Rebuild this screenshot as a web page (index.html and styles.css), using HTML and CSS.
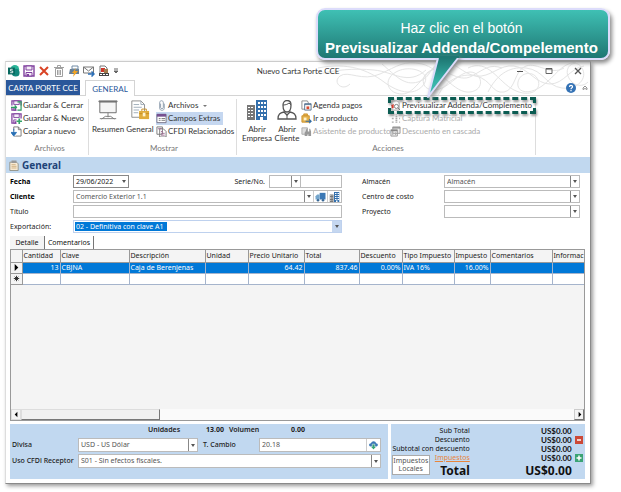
FILE: index.html
```html
<!DOCTYPE html>
<html lang="es">
<head>
<meta charset="utf-8">
<title>Nuevo Carta Porte CCE</title>
<link rel="stylesheet" href="styles.css">
</head>
<body>
<svg class="defs" width="0" height="0" aria-hidden="true">
  <defs>
    <symbol id="floppy" viewBox="0 0 12 12"><path d="M1 1h10v10H1z" fill="#fff" stroke="#80419e" stroke-width="1.4"/><path d="M3 1h6v4H3zM3 7.500h6V11H3z" fill="#f4ecf7" stroke="#80419e"/><path d="M4 9h2v2H4z" fill="#80419e"/></symbol>
    <symbol id="page" viewBox="0 0 12 12"><path d="M3 1h5l3 3v7H3z" fill="#fff" stroke="#777"/><path d="M8 1v3h3" fill="none" stroke="#777"/></symbol>
    <symbol id="building" viewBox="0 0 20 20"><path d="M9 0h11v20H9z" fill="#3470ad"/><path d="M0 5h8v15H0z" fill="#777"/><path d="M11 2h2v2h-2zm3 0h2v2h-2zm3 0h2v2h-2zm-6 4h2v2h-2zm3 0h2v2h-2zm3 0h2v2h-2zm-6 4h2v2h-2zm3 0h2v2h-2zm3 0h2v2h-2zm-6 4h2v2h-2zm3 0h2v2h-2zm3 0h2v2h-2zM1 7h2v1H1zm3 0h2v1H4zM1 10h2v1H1zm3 0h2v1H4zM1 13h2v1H1zm3 0h2v1H4zM1 16h2v1H1zm3 0h2v1H4zM13 17h3v3h-3z" fill="#fff"/></symbol>
  </defs>
</svg>

<div class="window">
  <header class="chrome">
    <svg class="swirls" viewBox="0 0 272 34" fill="none" stroke="#e4e4e4" aria-hidden="true">
      <path d="M0 6C30 0 50 8 66 20S98 34 106 22 92 2 78 10s-8 22 6 22 22-24 40-30M2 12c14-4 34-6 54-4S90 24 108 8M32 22c-8 8-18-2-10-8s22 6 40-2S86-2 104 2s32 30 48 28 12-20 0-20-22 18-36 18-14-16-2-20 26 14 40 6 18-12 30-8"/>
      <path d="M150 6c20-10 30 14 46 22s28 0 24-10-18-8-20 2 10 14 24 4 18-22 34-24M170 30c8-16 20-26 38-24s20 18 36 20 26-10 20-20-18-2-14 8 14 12 20 6M120 34c6-14 22-24 38-20s16 18 28 16 10-22 22-26 24 10 38 2"/>
      <path d="M64 2c14 12 22 22 36 18s12-18 24-20 20 12 34 14 24-12 38-10 22 18 36 18 20-16 34-18"/>
    </svg>
    <div class="titlebar">
      <div class="quick">
        <svg viewBox="0 0 14 14"><circle cx="8" cy="5" r="5" fill="#29b498"/><circle cx="9" cy="9" r="4.500" fill="#12877b"/><path d="M0 3h8v8H0z" fill="#07685f"/><path d="M5.500 5H3v2h2.500v2H2.500" fill="none" stroke="#fff"/></svg>
        <svg viewBox="0 0 12 12"><use href="#floppy"/></svg>
        <svg viewBox="0 0 12 12"><path d="M2 2l8 8M10 2l-8 8" stroke="#d94325" stroke-width="2"/></svg>
        <svg viewBox="0 0 12 12"><path d="M2.500 3.500h7v8h-7zM1 2.500h10M4.500 2V.5h3V2M4.500 5v5M6 5v5M7.500 5v5" fill="none" stroke="#888" stroke-width=".8"/></svg>
        <svg viewBox="0 0 12 12"><path d="M2 4h9v5H1z" fill="#697f94"/><path d="M4 1h6v3H4z" fill="#fff" stroke="#708ba5"/><path d="M8 3L4 8h2l-1 4 5-6H7z" fill="#f4a523"/></svg>
        <svg viewBox="0 0 12 12"><path d="M.5 2h10v6H.5zM.5 2l5 4 5-4" fill="#fff" stroke="#777"/><path d="M5 9h6M8.500 6.500L11 9l-2.500 2.500" fill="none" stroke="#2c70b8" stroke-width="1.500"/></svg>
        <svg viewBox="0 0 12 12"><path d="M2 1h5l2 2v6H2z" fill="#fff" stroke="#777"/><path d="M3 3h4v4H3z" fill="#cf3529"/><path d="M6 4h4v4H6z" fill="#a17c4e"/><path d="M1 8h10v3H1z" fill="#464646"/><path d="M2 9.500h2m1 0h2m1 0h2" stroke="#fff"/></svg>
        <svg class="more" viewBox="0 0 6 6"><path d="M1 1h4M1 3l2 2 2-2z" fill="#666" stroke="#666"/></svg>
      </div>
      <h1>Nuevo Carta Porte CCE</h1>
      <div class="controls">
        <button aria-label="Minimizar"><svg viewBox="0 0 8 8"><path d="M1 4.500h6" stroke="#555"/></svg></button>
        <button aria-label="Maximizar"><svg viewBox="0 0 8 8"><path d="M1 1.500h6v5H1z" fill="none" stroke="#666"/><path d="M1 2h6" stroke="#555"/></svg></button>
        <button aria-label="Cerrar"><svg viewBox="0 0 8 8"><path d="M1 1l6 6M7 1L1 7" stroke="#555" stroke-width="1.300"/></svg></button>
      </div>
    </div>
    <nav class="tabs">
      <button class="tab filled">CARTA PORTE CCE</button>
      <button class="tab current">GENERAL</button>
      <div class="help">
        <button aria-label="Ayuda"><svg class="help-icon" viewBox="0 0 10 10"><circle cx="5" cy="5" r="5" fill="#3472b5"/><path d="M3.500 4c0-2 3-2 3-.3C6.500 5 5 4.800 5 6.200M5 7v1.200" fill="none" stroke="#fff" stroke-width="1.200"/></svg></button>
        <button aria-label="Contraer"><svg class="fold-icon" viewBox="0 0 6 6"><path d="M1 3l2-2 2 2v1.500L3 3.500 1 4.500z" fill="none" stroke="#777" stroke-width=".8"/></svg></button>
      </div>
    </nav>
  </header>

  <section class="ribbon">
    <div class="group files">
      <div class="stack">
        <button class="cmd"><svg viewBox="0 0 12 12"><use href="#floppy"/><path d="M0 6h12v6H6V8H0z" fill="#fff"/><path d="M7 2h4v9H7M0 8h6M4 6l2 2-2 2" fill="none" stroke="#2e9b62" stroke-width="1.300"/></svg>Guardar &amp; Cerrar</button>
        <button class="cmd"><svg viewBox="0 0 12 12"><use href="#floppy"/><path d="M6 6h6v6H6z" fill="#fff"/><path d="M9 6v6M6 9h6" stroke="#35a56a" stroke-width="1.800"/></svg>Guardar &amp; Nuevo</button>
        <button class="cmd"><svg viewBox="0 0 12 12"><use href="#page"/><path d="M0 5h5v6H0z" fill="#fff"/><path d="M3 3v7M0 7l3 4 3-4z" fill="#2970b5" stroke="#2970b5"/></svg>Copiar a nuevo</button>
      </div>
      <p class="caption">Archivos</p>
    </div>
    <div class="group show">
      <div class="row">
        <button class="big"><svg viewBox="0 0 22 22"><path d="M1 1h20v1H1zM2 2h18v12H2z" fill="#f5f5f5" stroke="#666"/><path d="M11 14v5M4 21l4-3h6l4 3M2 20.500h18" fill="none" stroke="#777"/></svg>Resumen</button>
        <button class="big"><svg viewBox="0 0 22 22"><path d="M2 1h10l4 4v14H2z" fill="#fff" stroke="#888"/><path d="M12 1v4h4M4 5h6M4 8h9M4 11h6M4 14h5" fill="none" stroke="#9aa9b6"/><path d="M10 12h11v9H10z" fill="#e0ac3c"/><path d="M13 12v-2h5v2M10 15h11" fill="none" stroke="#c58b21"/><path d="M14 14h3v4h-3z" fill="#fff3cf"/></svg>General</button>
        <div class="stack">
          <button class="cmd"><svg viewBox="0 0 12 12"><path d="M5 4v4c0 2 3 2 3 0V3C8 0 4 0 4 3v6c0 3 5 3 5 0V4" fill="none" stroke="#8b9bac"/></svg>Archivos<i class="drop"></i></button>
          <button class="cmd on"><svg viewBox="0 0 12 12"><path d="M1 1.500h10v9H1z" fill="#fff" stroke="#747085"/><path d="M1 1h10v3H1z" fill="#765090"/><path d="M3 6h2m1 0h4M3 8h2m1 0h4" stroke="#777"/></svg>Campos Extras</button>
          <button class="cmd"><svg viewBox="0 0 12 12"><path d="M1 1h6v8H1zM4 3h4l3 3v6H4z" fill="#fff" stroke="#777"/><path d="M2 3h4M5.500 6h2M5.500 8h4M5.500 10h4" stroke="#9c6790"/></svg>CFDI Relacionados</button>
        </div>
      </div>
      <p class="caption">Mostrar</p>
    </div>
    <div class="group actions">
      <div class="row">
        <button class="big"><svg viewBox="0 0 20 20"><use href="#building"/></svg>Abrir<br>Empresa</button>
        <button class="big narrow"><svg viewBox="0 0 20 20"><path d="M1 19c0-5 2-6 6-7l3 3 3-3c4 1 6 2 6 7z" fill="#fff" stroke="#555" stroke-width="1.300"/><path d="M6 5c0-6 8-6 8 0s-2 7-4 7-4-1-4-7z" fill="#fff" stroke="#555" stroke-width="1.300"/><path d="M6 5c3 0 5-1 6-2l2 2M10 15v4" fill="none" stroke="#555"/></svg>Abrir<br>Cliente</button>
        <div class="stack wide">
          <button class="cmd"><svg viewBox="0 0 12 12"><path d="M1 1h6l1 2v7H1z" fill="#fff" stroke="#888"/><path d="M4 4h7v7H4z" fill="#fff" stroke="#54708e"/><path d="M4 5h7" stroke="#54708e"/><path d="M6 7h3v3H6z" fill="#d9492f"/></svg>Agenda pagos</button>
          <button class="cmd"><svg viewBox="0 0 12 12"><path d="M1 3h8v7H1zM3 3V1h4v2" fill="#e4b34f" stroke="#cd912b"/><path d="M3 5h3v3H3z" fill="#fff2cd"/><path d="M5 9h6M9 7l2 2-2 2" fill="none" stroke="#326ca4" stroke-width="1.300"/></svg>Ir a producto</button>
          <button class="cmd" disabled><svg viewBox="0 0 12 12"><path d="M1 2h6v7H1z" fill="#ddd" stroke="#aaa"/><path d="M5 6l1-3h1v3h2V3h1l1 3v5H8V9H7v2H4V7z" fill="#999"/></svg>Asistente de producto</button>
        </div>
        <div class="stack">
          <button class="cmd marked"><svg viewBox="0 0 12 12"><path d="M2 1h6l2 2v8H2z" fill="#fff" stroke="#999"/><path d="M1 6l3-2v5H2V7z" fill="#d9392b"/><circle cx="7" cy="7" r="2.200" fill="#fff" stroke="#777"/><path d="M8.500 8.500L11 11" stroke="#777"/></svg>Previsualizar Addenda/Complemento</button>
          <button class="cmd" disabled><svg viewBox="0 0 12 12"><path d="M2 2h2m2 0h2m2 0h1M2 6h2m2 0h2m2 0h1M2 10h2m2 0h2m2 0h1M6 4h2M6 8h2" stroke="#aaa" stroke-width="1.500"/></svg>Captura Matricial</button>
          <button class="cmd" disabled><svg viewBox="0 0 12 12"><path d="M3 1h8v7H3zM1 4h7v7H1z" fill="#eee" stroke="#999"/><path d="M3 2h8M1 5h7" stroke="#888" stroke-width="1.500"/><path d="M3 7v3m3-3v3" stroke="#aaa"/></svg>Descuento en cascada</button>
        </div>
      </div>
      <p class="caption">Acciones</p>
    </div>
  </section>

  <h2 class="section-title"><svg viewBox="0 0 12 12"><path d="M1 2h8l2 2v8H1z" fill="#f8ead4" stroke="#8c8c80"/><path d="M3 0h6v3H3z" fill="#999"/><path d="M3 5h5M3 7h6M3 9h6" stroke="#caa97a"/></svg>General</h2>

  <form class="form">
    <div class="fields main">
      <label class="strong" for="fecha">Fecha</label>
      <div class="line">
        <span class="combo date"><input id="fecha" value="29/06/2022"><button type="button" aria-label="Abrir fecha"></button></span>
        <label class="push" for="serie">Serie/No.</label>
        <span class="combo serie"><input id="serie"><button type="button" aria-label="Abrir serie"></button><input class="number" aria-label="Número"></span>
      </div>
      <label class="strong" for="cliente">Cliente</label>
      <span class="combo"><input id="cliente" value="Comercio Exterior 1.1"><button type="button" aria-label="Abrir cliente"></button><button type="button" class="tool" aria-label="Proveedor"><svg viewBox="0 0 12 12"><path d="M5 1h7v8H5z" fill="#3b78b5"/><path d="M0 9V5l2-2h3v6z" fill="#74a5cc"/><circle cx="3" cy="10" r="1.500" fill="#376795"/><circle cx="9" cy="10" r="1.500" fill="#376795"/></svg></button><button type="button" class="tool" aria-label="Empresa"><svg viewBox="0 0 20 20"><use href="#building"/></svg></button></span>
      <label for="titulo">Título</label>
      <span class="combo"><input id="titulo"></span>
      <label for="exportacion">Exportación:</label>
      <span class="combo focus"><span class="cell"><input id="exportacion" class="picked" value="02 - Definitiva con clave A1"></span><button type="button" aria-label="Abrir exportación"></button></span>
    </div>
    <div class="fields side">
      <label for="almacen">Almacén</label>
      <span class="combo"><input id="almacen" value="Almacén"><button type="button" aria-label="Abrir almacén"></button></span>
      <label for="costo">Centro de costo</label>
      <span class="combo"><input id="costo"><button type="button" aria-label="Abrir centro"></button></span>
      <label for="proyecto">Proyecto</label>
      <span class="combo"><input id="proyecto"><button type="button" aria-label="Abrir proyecto"></button></span>
    </div>
  </form>

  <div class="subtabs"><button class="current">Detalle</button><button>Comentarios</button></div>
  <div class="sheet">
    <table>
      <colgroup><col class="c-mark"><col class="c-qty"><col class="c-key"><col class="c-desc"><col class="c-unit"><col class="c-price"><col class="c-total"><col class="c-disc"><col class="c-type"><col class="c-tax"><col class="c-notes"><col></colgroup>
      <thead><tr><th></th><th>Cantidad</th><th>Clave</th><th>Descripción</th><th>Unidad</th><th>Precio Unitario</th><th>Total</th><th>Descuento</th><th>Tipo Impuesto</th><th>Impuesto</th><th>Comentarios</th><th>Informac</th></tr></thead>
      <tbody>
        <tr class="selected"><th><svg viewBox="0 0 10 10"><path d="M3 1l4 4-4 4z" fill="#000"/></svg></th><td class="num">13</td><td>CBJNA</td><td>Caja de Berenjenas</td><td></td><td class="num">64.42</td><td class="num">837.46</td><td class="num">0.00%</td><td>IVA 16%</td><td class="num">16.00%</td><td></td><td></td></tr>
        <tr><th><svg viewBox="0 0 10 10"><path d="M5 2v6M2 5h6M3 3l4 4M7 3L3 7" stroke="#222"/></svg></th><td></td><td></td><td></td><td></td><td></td><td></td><td></td><td></td><td></td><td></td><td></td></tr>
      </tbody>
    </table>
    <div class="scroll">
      <button aria-label="Izquierda"><svg viewBox="0 0 10 10"><path d="M6 2v6L3 5z"/></svg></button>
      <div class="thumb"></div>
      <button class="right" aria-label="Derecha"><svg viewBox="0 0 10 10"><path d="M4 2v6l3-3z"/></svg></button>
    </div>
  </div>

  <footer class="summary">
    <div class="panel money">
      <div class="counts"><b>Unidades</b><b class="value">13.00</b><b>Volumen</b><b class="value">0.00</b></div>
      <label for="divisa">Divisa</label>
      <div class="line">
        <span class="combo divisa"><input id="divisa" value="USD - US Dólar"><button aria-label="Abrir divisa"></button></span>
        <label class="rate" for="cambio">T. Cambio</label>
        <span class="combo grow"><input id="cambio" value="20.18"><button class="tool" aria-label="Actualizar"><svg viewBox="0 0 12 12"><path d="M3 8C0 8 0 4 3 4c1-4 6-3 6 0 3 0 3 4 0 4z" fill="#3a78b6"/><path d="M4.500 5h3v3h2L6 11.500 2.500 8h2z" fill="#35a574" stroke="#fff" stroke-width=".6"/></svg></button></span>
      </div>
      <label for="uso">Uso CFDi Receptor</label>
      <span class="combo"><input id="uso" value="S01 - Sin efectos fiscales."><button aria-label="Abrir uso"></button></span>
    </div>
    <div class="panel totals">
      <span class="name">Sub Total</span><b>US$0.00</b><i></i>
      <span class="name">Descuento</span><b>US$0.00</b><button class="sign minus" aria-label="Quitar"><svg viewBox="0 0 8 8"><path d="M2 4h4" stroke="#fff" stroke-width="1.500"/></svg></button>
      <span class="name">Subtotal con descuento</span><b>US$0.00</b><i></i>
      <span class="name"><a href="#">Impuestos</a></span><b>US$0.00</b><button class="sign plus" aria-label="Agregar"><svg viewBox="0 0 8 8"><path d="M1.500 4h5M4 1.500v5" stroke="#fff" stroke-width="1.500"/></svg></button>
      <strong>Total</strong><strong>US$0.00</strong><i></i>
      <button class="local">Impuestos<br>Locales</button>
    </div>
  </footer>
</div>

<aside class="callout">
  <svg class="tail" viewBox="0 0 40 44" aria-hidden="true"><defs><linearGradient id="fade" x2="0" y2="1"><stop offset="0" stop-color="#1e7773"/><stop offset=".6" stop-color="#36b2a7"/><stop offset="1" stop-color="#3fc0b4"/></linearGradient></defs><path d="M12 2L2 41 32 2" fill="url(#fade)" stroke="#dcdcfb" stroke-width="2" stroke-linejoin="round"/><path d="M11 0h22v2H11z" fill="#1e7773"/></svg>
  <p>Haz clic en el botón</p>
  <p class="loud">Previsualizar Addenda/Compelemento</p>
</aside>
</body>
</html>
```

FILE: styles.css
```css
* { box-sizing: border-box; }
body { margin: 0; padding: 61px 30px 8px 5px; background: #fff; color: #222; font: 7px/12px "Noto Sans", "Open Sans", sans-serif; position: relative; }
button, input { font: inherit; color: inherit; margin: 0; padding: 0; border: 0; background: none; min-width: 0; border-radius: 0; }
button { white-space: nowrap; }
h1, h2, p { margin: 0; font-weight: 400; }
svg { display: block; flex: none; }
.defs { position: absolute; }
.chrome, .ribbon, .totals { font-family: Lato, "Noto Sans", sans-serif; font-size: 8px; }

.window { background: #fff; border: 1px solid #ccc; border-color: #ccc #8a8a8a #8a8a8a #ddd; box-shadow: 2px 2px 4px #999; padding-bottom: 4px; }
.chrome { position: relative; }
.swirls { position: absolute; right: 0; top: 0; width: 272px; height: 34px; }
.titlebar { position: relative; display: grid; grid-template-columns: 1fr auto 1fr; align-items: center; height: 18px; }
.titlebar h1 { font-size: 8px; color: #333; }
.quick { display: flex; align-items: center; gap: 3px; padding-left: 2px; }
.quick svg { width: 12px; height: 12px; }
.quick .more { width: 6px; height: 6px; }
.controls { display: flex; justify-content: flex-end; gap: 21px; padding-right: 8px; }
.controls svg { width: 8px; height: 8px; }
.tabs { position: relative; display: flex; height: 16px; border-bottom: 1px solid #d4d4d4; }
.filled { width: 74px; background: #2a579a; color: #fff; }
.tabs .current { width: 50px; margin: 0 0 -1px 5px; background: #fff; border: 1px solid #d4d4d4; border-bottom: 0; color: #2a579a; }
.help { margin-left: auto; display: flex; align-items: center; gap: 6px; padding: 0 2px 0 0; }
.help-icon { width: 10px; height: 10px; }
.fold-icon { width: 6px; height: 6px; }

.ribbon { display: flex; height: 61px; padding: 3px 0 2px; color: #333; }
.group { display: flex; flex-direction: column; justify-content: space-between; border-right: 1px solid #ddd; padding-left: 4px; }
.files { width: 83px; padding-left: 5px; }
.show { width: 148px; padding-left: 3px; }
.actions { width: 299px; }
.caption { text-align: center; color: #777; line-height: 14px; }
.row { display: flex; height: 39px; }
.stack { display: flex; flex-direction: column; align-items: flex-start; flex: none; }
.stack.wide { width: 89px; }
.cmd { display: flex; align-items: center; gap: 1px; height: 13px; line-height: 13px; position: relative; }
.cmd svg { width: 11px; height: 11px; }
.cmd.on { background: #c5d7f0; padding-right: 3px; }
.cmd:disabled { color: #aaa; }
.marked::after { content: ""; position: absolute; inset: -2px -4px -2px -2px; border: 3px dashed #0b5c52; filter: drop-shadow(1px 2px 1px #999); }
.drop { margin-left: 4px; border: 2px solid transparent; border-top-color: #777; border-bottom: 0; }
.big { flex: none; width: 32px; height: 44px; line-height: 9px; display: block; text-align: center; align-self: flex-start; }
.big svg { width: 20px; height: 20px; margin: 0 auto 5px; }
.big:not(:has(br)) { height: 36px; }
.narrow { width: 28px; }

.section-title { display: flex; align-items: center; gap: 3px; height: 16px; padding-left: 3px; background: #c1d8ef; color: #1e4378; font-size: 10px; font-weight: 700; }
.section-title svg { width: 10px; height: 11px; }

.form { display: flex; gap: 20px; padding: 2px 10px 3px 4px; }
.fields { display: grid; align-content: start; align-items: center; row-gap: 2px; }
.main { grid-template-columns: 63px 1fr; flex: 332; }
.side { grid-template-columns: 82px 1fr; flex: 218; }
.strong { font-weight: 700; color: #000; }
.line { display: flex; align-items: center; }
.push { margin: 0 4px 0 auto; }
.combo { display: flex; height: 13px; min-width: 0; border: 1px solid #bbb; background: #fff; color: #555; }
.combo input { flex: 1; width: 0; padding-left: 2px; }
.combo button { width: 9px; border-left: 1px solid #888; display: grid; place-items: center; }
.combo button:not(.tool)::after { content: ""; border: 2px solid transparent; border-top: 3px solid #555; border-bottom: 0; }
.combo .tool { width: 14px; border-left-color: #ccc; }
.tool svg { width: 11px; height: 10px; }
.date { width: 56px; border-color: #888; color: #222; }
.date button { border: 0; }
.serie { width: 73px; }
.serie input { flex: none; width: 21px; }
.serie .number { flex: 1; border-left: 1px solid #bbb; }
.cell { flex: 1; display: flex; padding: 1px; }
.focus { border-color: #bed1ee; }
.focus .picked { flex: none; width: 92px; padding: 0 0 0 1px; background: #0078d7; color: #fff; }
.focus button { background: #c5d7f0; border: 0; }

.subtabs { display: flex; padding-left: 4px; height: 13px; color: #111; }
.subtabs button { border-right: 1px solid #777; width: 49px; padding-top: 1px; }
.subtabs .current { width: 35px; background: #f4f4f4; padding: 0; }

.sheet { display: flex; flex-direction: column; justify-content: space-between; height: 172px; margin: 0 5px 0 4px; background: #f4f4f4; border: 1px solid #999; overflow: hidden; }
table { width: 100%; table-layout: fixed; border-collapse: collapse; }
th, td { height: 11px; padding: 0 1px; line-height: 10px; border: 0 solid #a5b4cc; border-width: 0 1px 1px 0; overflow: hidden; white-space: nowrap; text-align: left; font-weight: 400; background: #fff; }
th { background: #f4f4f4; border-color: #999; }
th:last-child, td:last-child { border-right: 0; padding-right: 0; }
thead th { height: 12px; }
th svg { width: 9px; height: 9px; }
.selected td { background: #0078d7; color: #fff; }
.num { text-align: right; }
.c-mark { width: 11px; } .c-qty { width: 38px; } .c-key { width: 69px; } .c-desc { width: 76px; } .c-unit { width: 43px; } .c-price { width: 56px; }
.c-total { width: 55px; } .c-disc { width: 43px; } .c-type { width: 52px; } .c-tax { width: 36px; } .c-notes { width: 62px; }
.scroll { display: flex; height: 11px; background: #fafafa; }
.scroll button { width: 10px; border: 1px solid #ddd; background: #f4f4f4; }
.scroll svg { width: 9px; height: 9px; }
.scroll .right { margin-left: auto; border-color: #ccc #777 #777 #ccc; }
.thumb { width: 139px; background: #f0f0f0; border: 1px solid; border-color: #ddd #777 #777 #ddd; }

.summary { display: flex; gap: 3px; margin: 3px 5px 0 4px; }
.panel { background: #c1d8f0; height: 55px; }
.money { flex: 376; display: grid; grid-template-columns: 66px 1fr; grid-template-rows: 12px 14px 14px; row-gap: 2px; align-items: center; padding: 0 7px 0 2px; }
.money .combo { height: 14px; }
.money label { font-weight: 500; }
.counts { grid-column: 1 / -1; display: flex; padding-left: 136px; }
.counts b { font-weight: 600; width: 41px; }
.counts .value { font-weight: 700; width: 35px; text-align: right; margin: 0 5px 0 0; }
.divisa { width: 120px; }
.rate { width: 61px; padding-left: 5px; }
.grow { flex: 1; }
.totals { flex: 196; display: grid; grid-template-columns: 79px 102px 1fr; grid-template-rows: repeat(4, 9px) 17px; position: relative; align-items: center; justify-items: end; padding-top: 2px; padding-right: 2px; color: #111; }
.name { white-space: nowrap; font: 7px/9px "Noto Sans", sans-serif; }
.totals strong { font: 700 12px/17px "Noto Sans", sans-serif; }
.totals a { color: #e8853b; }
.sign { width: 8px; height: 8px; }
.sign svg { width: 8px; height: 8px; }
.minus { background: #cc4937; } .plus { background: #3ba374; }
.local { position: absolute; left: 1px; bottom: 4px; width: 38px; height: 20px; border: 1px solid #aaa; background: #fff; color: #555; font: 7px/8px "Noto Sans", sans-serif; }

.callout { position: absolute; left: 316px; right: 11px; top: 8px; height: 52px; padding: 8px 3px 0 0; border: 2px solid #dcdcfb; border-radius: 9px; background: linear-gradient(#3fc0b4, #1e7773); box-shadow: 2px 3px 4px #888; color: #fff; text-align: center; font: 14px/20px "Liberation Sans", Arial, sans-serif; }
.loud { font-size: 15px; font-weight: 700; white-space: nowrap; }
.tail { position: absolute; left: 108px; top: 46px; width: 40px; height: 44px; filter: drop-shadow(2px 2px 2px #888); }
```
